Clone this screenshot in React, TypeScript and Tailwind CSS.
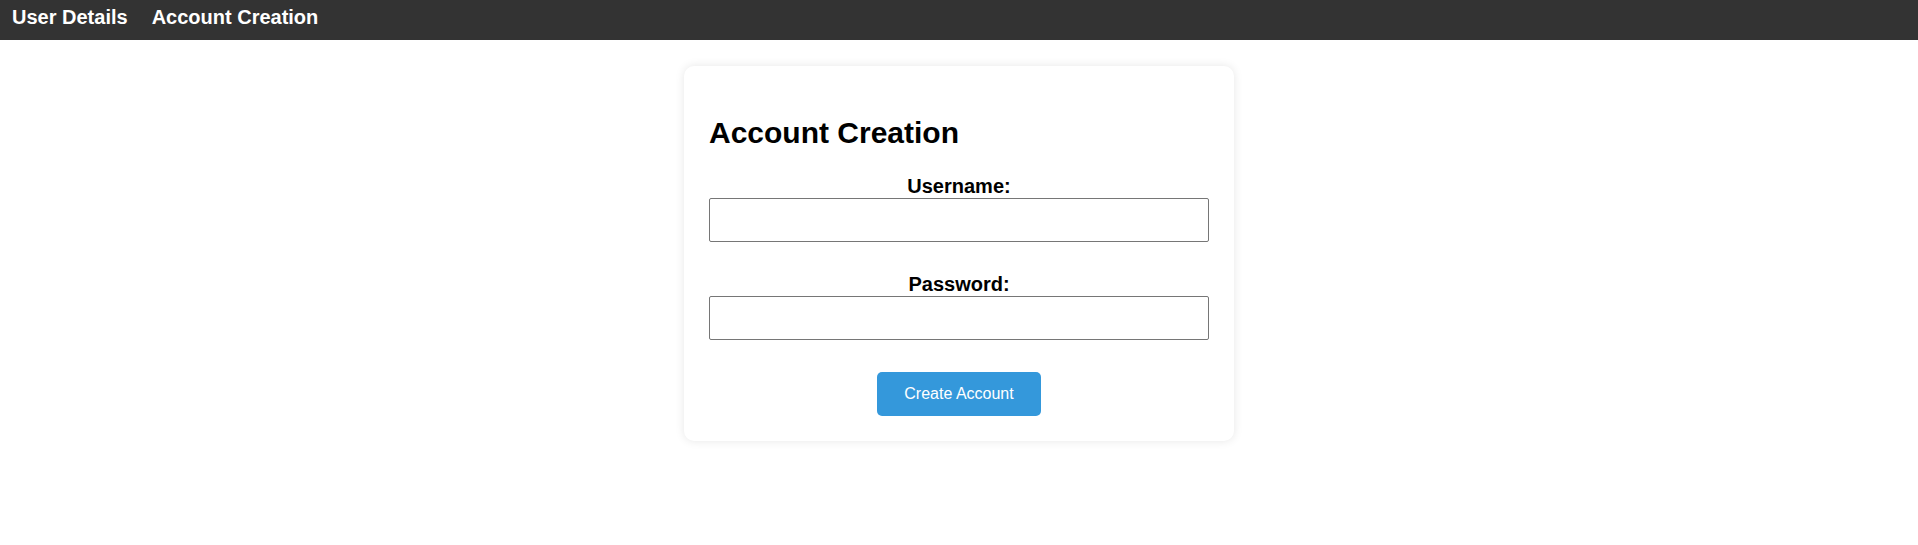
export default function App() {
  return (
    <div className="min-h-screen bg-white font-['Liberation_Sans',Arial,sans-serif] text-black">
      <nav className="flex h-[40px] items-start gap-[24px] bg-[#333333] pl-[12px] pt-[6px]">
        <a href="#" className="text-[20px] font-bold leading-[23px] text-white">
          User Details
        </a>
        <a href="#" className="text-[20px] font-bold leading-[23px] text-white">
          Account Creation
        </a>
      </nav>

      <div className="flex justify-center pt-[26px]">
        <div className="w-[550px] rounded-[10px] bg-white px-[25px] pb-[25px] pt-[50px] shadow-[0_0_10px_rgba(0,0,0,0.1)]">
          <h2 className="text-[30px] font-bold leading-[34px]">Account Creation</h2>

          <form className="mt-[25px] flex flex-col" onSubmit={(e) => e.preventDefault()}>
            <label htmlFor="username" className="text-center text-[20px] font-bold leading-[23px]">
              Username:
            </label>
            <input
              id="username"
              type="text"
              className="h-[44px] w-[500px] rounded-[2px] border border-[#767676] bg-white px-2 outline-none"
            />

            <label htmlFor="password" className="mt-[31px] text-center text-[20px] font-bold leading-[23px]">
              Password:
            </label>
            <input
              id="password"
              type="password"
              className="h-[44px] w-[500px] rounded-[2px] border border-[#767676] bg-white px-2 outline-none"
            />

            <div className="mt-[32px] flex justify-center">
              <button
                type="submit"
                className="h-[44px] w-[164px] rounded-[5px] bg-[#3498db] text-[16px] leading-[18px] text-white"
              >
                Create Account
              </button>
            </div>
          </form>
        </div>
      </div>
    </div>
  );
}
